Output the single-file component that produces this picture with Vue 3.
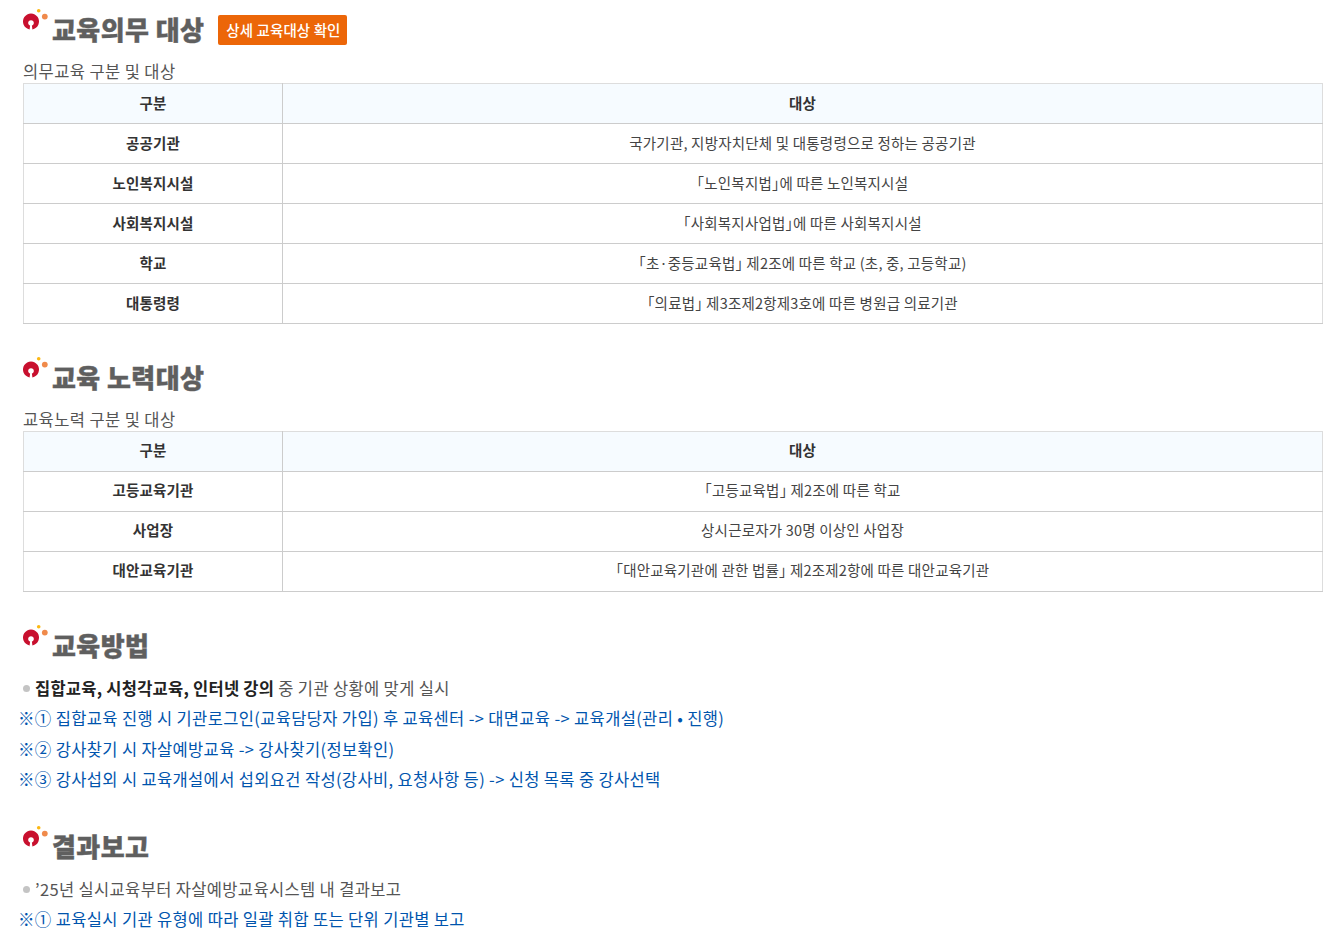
<script setup>
const tables = [
  {
    title: '교육의무 대상', button: '상세 교육대상 확인', caption: '의무교육 구분 및 대상',
    rows: [
      ['공공기관', '국가기관, 지방자치단체 및 대통령령으로 정하는 공공기관'],
      ['노인복지시설', '「노인복지법」에 따른 노인복지시설'],
      ['사회복지시설', '「사회복지사업법」에 따른 사회복지시설'],
      ['학교', '「초·중등교육법」 제2조에 따른 학교 (초, 중, 고등학교)'],
      ['대통령령', '「의료법」 제3조제2항제3호에 따른 병원급 의료기관'],
    ],
  },
  {
    title: '교육 노력대상', caption: '교육노력 구분 및 대상',
    rows: [
      ['고등교육기관', '「고등교육법」 제2조에 따른 학교'],
      ['사업장', '상시근로자가 30명 이상인 사업장'],
      ['대안교육기관', '「대안교육기관에 관한 법률」 제2조제2항에 따른 대안교육기관'],
    ],
  },
]
</script>

<template>
  <div class="page">
    <section v-for="t in tables" :key="t.title" class="sec" :class="{ first: t.button }">
      <div class="head">
        <svg class="logo" width="26" height="22" viewBox="0 0 26 22">
          <path d="M6.600 20.400A8 8 0 1 1 9.400 20.400L8.900 16.600A2.800 2.800 0 1 0 7.100 16.600Z" fill="#c8102e"/>
          <circle cx="15.700" cy="1.800" r="1.800" fill="#fcb813"/>
          <circle cx="21.800" cy="7.600" r="2.900" fill="#f08a4b"/>
        </svg>
        <h2>{{ t.title }}</h2>
        <a v-if="t.button" class="btn">{{ t.button }}</a>
      </div>
      <div class="cap">{{ t.caption }}</div>
      <table>
        <thead><tr><th class="c1">구분</th><th>대상</th></tr></thead>
        <tbody>
          <tr v-for="r in t.rows" :key="r[0]"><th class="c1">{{ r[0] }}</th><td>{{ r[1] }}</td></tr>
        </tbody>
      </table>
    </section>

    <section class="sec text">
      <div class="head"><svg class="logo" width="26" height="22" viewBox="0 0 26 22">
          <path d="M6.600 20.400A8 8 0 1 1 9.400 20.400L8.900 16.600A2.800 2.800 0 1 0 7.100 16.600Z" fill="#c8102e"/>
          <circle cx="15.700" cy="1.800" r="1.800" fill="#fcb813"/>
          <circle cx="21.800" cy="7.600" r="2.900" fill="#f08a4b"/>
        </svg><h2>교육방법</h2></div>
      <p class="dot"><b>집합교육, 시청각교육, 인터넷 강의</b> 중 기관 상황에 맞게 실시</p>
      <p class="note">※① 집합교육 진행 시 기관로그인(교육담당자 가입) 후 교육센터 -&gt; 대면교육 -&gt; 교육개설(관리 • 진행)</p>
      <p class="note">※② 강사찾기 시 자살예방교육 -&gt; 강사찾기(정보확인)</p>
      <p class="note">※③ 강사섭외 시 교육개설에서 섭외요건 작성(강사비, 요청사항 등) -&gt; 신청 목록 중 강사선택</p>
    </section>

    <section class="sec text">
      <div class="head"><svg class="logo" width="26" height="22" viewBox="0 0 26 22">
          <path d="M6.600 20.400A8 8 0 1 1 9.400 20.400L8.900 16.600A2.800 2.800 0 1 0 7.100 16.600Z" fill="#c8102e"/>
          <circle cx="15.700" cy="1.800" r="1.800" fill="#fcb813"/>
          <circle cx="21.800" cy="7.600" r="2.900" fill="#f08a4b"/>
        </svg><h2>결과보고</h2></div>
      <p class="dot">’25년 실시교육부터 자살예방교육시스템 내 결과보고</p>
      <p class="note">※① 교육실시 기관 유형에 따라 일괄 취합 또는 단위 기관별 보고</p>
    </section>
  </div>
</template>

<style>
html, body { margin: 0; background: #fff; overflow: hidden; }
</style>
<style scoped>
.page { padding: 9px 21px 0 23px; height: 924px; overflow: hidden; font-family: "Noto Sans CJK KR", "Noto Sans", sans-serif; color: #555; font-size: 16.500px; letter-spacing: .35px; }
.sec { margin-bottom: 33px; }
.text { margin-bottom: 31px; }
.head { display: flex; align-items: flex-start; height: 38px; position: relative; padding-left: 29px; }
.logo { position: absolute; left: 0; top: 0; }
h2 { margin: 2px 0 0; font-size: 26px; line-height: 36px; font-weight: 900; color: #5f5f5f; letter-spacing: .4px; -webkit-text-stroke: .4px #5f5f5f; }
.btn { margin: 6px 0 0 14px; height: 30px; padding: 0 6px 0 8px; background: #ec6608; color: #fff; font-size: 14.500px; font-weight: 500; letter-spacing: .1px; line-height: 29px; border-radius: 2px; }
.cap { height: 36px; padding-top: 12px; line-height: 24px; box-sizing: border-box; color: #555; letter-spacing: .4px; }
table { width: 100%; border-collapse: collapse; table-layout: fixed; }
th, td { height: 36px; padding: 0 0 3px; border: 1px solid #ccc; text-align: center; font-size: 14.500px; letter-spacing: .2px; line-height: 20px; color: #444; font-weight: 400; font-feature-settings: "halt"; }
thead th { border-top-color: #ddd; background: #f6fbff; }
tr > :first-child { border-left-color: #ddd; }
tr > :last-child { border-right-color: #ddd; }
.first th, .first td { height: 37px; padding-bottom: 2px; }
th { font-weight: 700; color: #333; }
.c1 { width: 258px; }
p { margin: 0; height: 30.400px; line-height: 30.400px; white-space: nowrap; }
.dot { padding-left: 12px; position: relative; }
.dot::before { content: ""; position: absolute; left: 0; top: 12px; width: 7px; height: 7px; border-radius: 50%; background: #c4c4c4; }
.dot b { color: #222; font-weight: 700; letter-spacing: .25px; }
.note { color: #0054ad; margin-left: -5px; }
.text .head { margin-bottom: 10px; }
</style>
